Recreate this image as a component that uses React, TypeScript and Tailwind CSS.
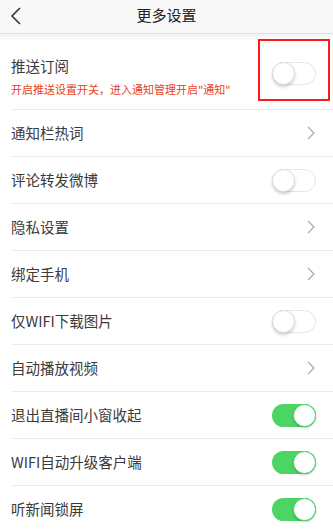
import React from "react";

const Toggle = ({ on }: { on: boolean }) =>
  on ? (
    <div className="relative w-[44px] h-[23px] rounded-full bg-[#4cd464]">
      <div className="absolute right-0 top-0 w-[23px] h-[23px] rounded-full bg-white border border-[#4cd464] shadow-[0_1px_2px_rgba(0,0,0,0.2)]" />
    </div>
  ) : (
    <div className="relative w-[44px] h-[23px] rounded-full bg-white border border-[#e6e6e6]">
      <div className="absolute -left-px -top-px w-[23px] h-[23px] rounded-full bg-white border border-[#dcdcdc] shadow-[0_2px_3px_rgba(0,0,0,0.18)]" />
    </div>
  );

const Chevron = () => (
  <svg width="8" height="14" viewBox="0 0 8 14" className="mr-[1px]">
    <path d="M1 1 L7 7 L1 13" fill="none" stroke="#a8a8a8" strokeWidth="1.2" />
  </svg>
);

const Row = ({ label, right }: { label: string; right: React.ReactNode }) => (
  <div className="h-[47px] flex items-center justify-between border-b border-[#ececec] ml-[11px]">
    <span className="text-[14.5px] text-[#3a3a3a]">{label}</span>
    <div className="mr-[17px] flex items-center">{right}</div>
  </div>
);

export default function App() {
  return (
    <div
      className="w-[333px] h-[530px] overflow-hidden bg-white"
      style={{ fontFamily: '"Noto Sans CJK SC", "Noto Sans", sans-serif' }}
    >
      <div className="h-[34px] bg-[#f8f8f8] border-b border-[#e2e2e2] relative flex items-center justify-center">
        <svg width="12" height="18" viewBox="0 0 12 18" className="absolute left-[10px] top-[7px]">
          <path d="M10 1 L2 9 L10 17" fill="none" stroke="#333" strokeWidth="1.6" />
        </svg>
        <span className="text-[15px] text-[#222] -mt-[2px]">更多设置</span>
      </div>
      <div className="h-[7px] bg-gradient-to-b from-[#f2f2f2] to-white" />
      <div className="h-[69px] border-b border-[#ececec] ml-[11px] flex items-center justify-between relative">
        <div className="flex flex-col pt-[2px]">
          <span className="text-[14.5px] text-[#3a3a3a] leading-[20px]">推送订阅</span>
          <span className="text-[11px] text-[#e8421e] leading-[14px] mt-[6px]">
            开启推送设置开关，进入通知管理开启"通知"
          </span>
        </div>
        <div className="mr-[17px] mt-[-4px]">
          <Toggle on={false} />
        </div>
        <div className="absolute left-[247px] top-[-2px] w-[72px] h-[62px] border-2 border-[#ff1a1a]" />
      </div>
      <Row label="通知栏热词" right={<Chevron />} />
      <Row label="评论转发微博" right={<Toggle on={false} />} />
      <Row label="隐私设置" right={<Chevron />} />
      <Row label="绑定手机" right={<Chevron />} />
      <Row label="仅WIFI下载图片" right={<Toggle on={false} />} />
      <Row label="自动播放视频" right={<Chevron />} />
      <Row label="退出直播间小窗收起" right={<Toggle on={true} />} />
      <Row label="WIFI自动升级客户端" right={<Toggle on={true} />} />
      <Row label="听新闻锁屏" right={<Toggle on={true} />} />
    </div>
  );
}
